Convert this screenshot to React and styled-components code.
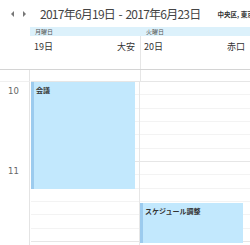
import React from "react";
import styled, { createGlobalStyle } from "styled-components";

const Global = createGlobalStyle`
  html, body { margin: 0; padding: 0; background: #fff; }
  body { font-family: "Noto Sans CJK JP", "Noto Sans", sans-serif; color: #333; }
  #root { width: 250px; height: 245px; overflow: hidden; }
`;

const Page = styled.div`
  width: 250px;
  height: 245px;
  overflow: hidden;
  display: flex;
  flex-direction: column;
`;

const Toolbar = styled.div`
  height: 27px;
  display: flex;
  align-items: center;
  padding-left: 11px;
  flex-shrink: 0;
  white-space: nowrap;
  overflow: hidden;
`;

const Arrow = styled.span`
  width: 0;
  height: 0;
  flex-shrink: 0;
  border-top: 3px solid transparent;
  border-bottom: 3px solid transparent;
  ${(p) => (p.dir === "left" ? "border-right: 3px solid #777;" : "border-left: 3px solid #777;")}
  margin-right: 9px;
`;

const Title = styled.span`
  font-size: 12px;
  font-weight: 400;
  color: #444;
  margin-left: 5px;
  letter-spacing: -0.75px;
  word-spacing: 1.5px;
  flex-shrink: 0;
`;

const Location = styled.span`
  font-size: 6.5px;
  font-weight: 700;
  color: #333;
  margin-left: 17px;
  flex-shrink: 0;
`;

const Row = styled.div`
  display: grid;
  grid-template-columns: 30px 110px 110px;
  flex-shrink: 0;
`;

const Gutter = styled.div`
  border-right: 1px solid ${(p) => (p.line ? "#e4e4e4" : "transparent")};
`;

const DayBand = styled.div`
  height: 9px;
  background: #dcf1fb;
  font-size: 6px;
  line-height: 9px;
  color: #555;
  padding-left: ${(p) => p.pad}px;
`;

const DateCell = styled.div`
  height: 33px;
  display: flex;
  justify-content: space-between;
  align-items: flex-start;
  padding: 4px 5px 0 3px;
  box-sizing: border-box;
  font-size: 9px;
  color: #333;
  border-left: 1px solid ${(p) => (p.divider ? "#e6e6e6" : "transparent")};
`;

const Divider = styled.div`
  height: 0;
  border-top: 1px solid #d4d4d4;
  flex-shrink: 0;
`;

const Spacer = styled.div`
  height: 11px;
  border-right: ${(p) => (p.line ? "1px solid #e4e4e4" : "none")};
`;

const SpacerCell = styled.div`
  height: 11px;
  border-left: 1px solid ${(p) => (p.divider ? "#e6e6e6" : "transparent")};
`;

const Grid = styled.div`
  display: grid;
  grid-template-columns: 30px 110px 110px;
  flex: 1;
  overflow: hidden;
`;

const TimeGutter = styled.div`
  border-right: 1px solid #e4e4e4;
  border-top: 1px solid #f0f0f0;
`;

const HourLabel = styled.div`
  height: 80px;
  box-sizing: border-box;
  padding: 4px 0 0 8px;
  font-family: "DejaVu Sans", sans-serif;
  font-size: 8.5px;
  color: #666;
`;

const DayColumn = styled.div`
  position: relative;
  border-left: 1px solid ${(p) => (p.divider ? "#e6e6e6" : "transparent")};
  margin-left: ${(p) => (p.divider ? "-1px" : "0")};
`;

const Slot = styled.div`
  height: 13.33px;
  box-sizing: border-box;
  border-top: 1px solid ${(p) => (p.hour ? "#e6e6e6" : "#f3f3f3")};
`;

const Event = styled.div`
  position: absolute;
  left: 0;
  width: ${(p) => p.w}px;
  top: ${(p) => p.top}px;
  height: ${(p) => p.h}px;
  background: #c2e8fd;
  border-left: 3px solid #9ccbee;
  box-sizing: border-box;
  padding: 3px 0 0 2px;
  font-size: 7px;
  font-weight: 700;
  color: #333;
`;

const slots = Array.from({ length: 18 }, (_, i) => i);

function Column({ divider, children }) {
  return (
    <DayColumn divider={divider}>
      {slots.map((i) => (
        <Slot key={i} hour={i % 6 === 0} />
      ))}
      {children}
    </DayColumn>
  );
}

export default function App() {
  return (
    <Page>
      <Global />
      <Toolbar>
        <Arrow dir="left" />
        <Arrow dir="right" />
        <Title>2017年6月19日 - 2017年6月23日</Title>
        <Location>中央区, 東京</Location>
      </Toolbar>
      <Row>
        <Gutter />
        <DayBand pad={5}>月曜日</DayBand>
        <DayBand pad={6}>火曜日</DayBand>
      </Row>
      <Row>
        <Gutter />
        <DateCell>
          <span>19日</span>
          <span>大安</span>
        </DateCell>
        <DateCell divider>
          <span>20日</span>
          <span>赤口</span>
        </DateCell>
      </Row>
      <Divider />
      <Row>
        <Spacer line />
        <SpacerCell />
        <SpacerCell divider />
      </Row>
      <Grid>
        <TimeGutter>
          <HourLabel>10</HourLabel>
          <HourLabel>11</HourLabel>
        </TimeGutter>
        <Column>
          <Event top={1} h={107} w={104}>会議</Event>
        </Column>
        <Column divider>
          <Event top={122} h={40} w={103}>スケジュール調整</Event>
        </Column>
      </Grid>
    </Page>
  );
}
